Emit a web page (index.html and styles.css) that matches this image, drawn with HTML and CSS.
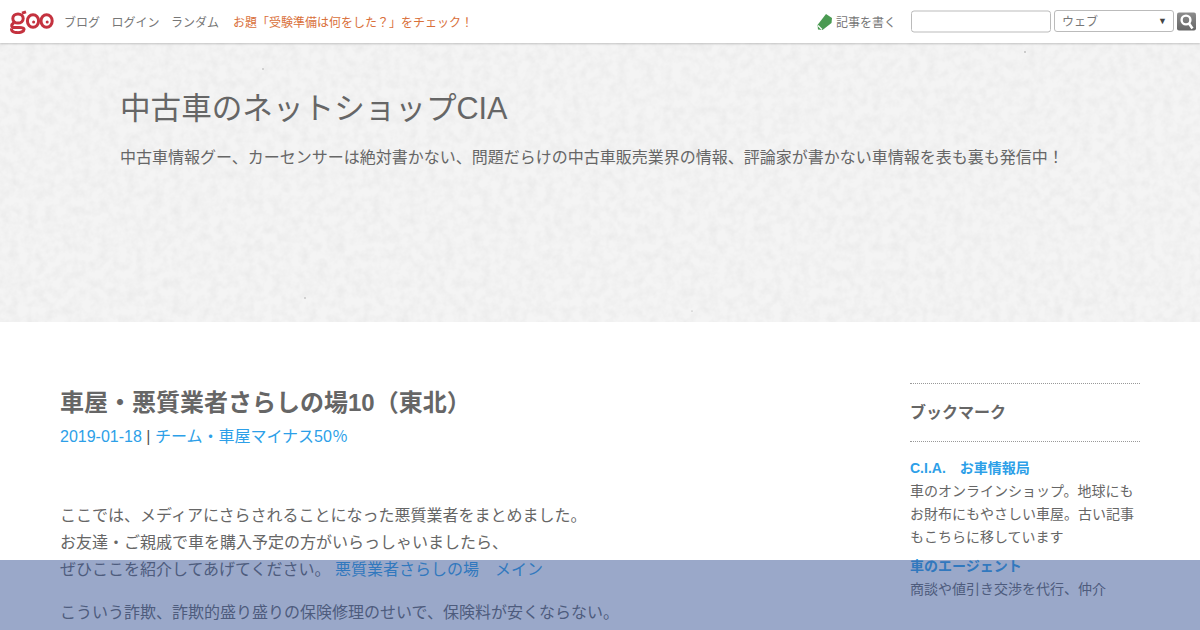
FILE: index.html
```html
<!DOCTYPE html>
<html lang="ja">
<head>
<meta charset="utf-8">
<title>中古車のネットショップCIA</title>
<link rel="stylesheet" href="styles.css">
</head>
<body>
<header class="topbar">
  <svg class="logo" width="44" height="24" viewBox="0 0 44 24" aria-label="goo">
    <g fill="none" stroke="#c4323f" stroke-width="3">
      <ellipse cx="8" cy="8.5" rx="5.2" ry="4.6"/>
      <path d="M12 3.2 L16 1.8 M4 12.5 C1 15 1 17 4 17.5 C8 18 13.5 16.5 14 19 C14.5 21.5 10 22.8 7 22.6 C3.5 22.4 1 21 1.6 18.5"/>
      <ellipse cx="23" cy="11" rx="5.6" ry="6.2"/>
      <ellipse cx="36.6" cy="11" rx="5.6" ry="6.2"/>
    </g>
    <circle cx="23.6" cy="12" r="1.5" fill="#c4323f"/>
    <circle cx="37.2" cy="12" r="1.5" fill="#c4323f"/>
  </svg>
  <nav class="nav">
    <a>ブログ</a><a>ログイン</a><a>ランダム</a>
  </nav>
  <a class="topic">お題「受験準備は何をした？」をチェック！</a>
  <div class="tools">
    <a class="write">
      <svg width="17" height="18" viewBox="0 0 16 18"><path d="M9.5 1 L15.5 5 L15 10 L6 17 L1.5 16.5 L1 12 Z" fill="#4a9a52"/><path d="M1.5 12.5 L5.5 16.5" stroke="#fff" stroke-width="1.2"/></svg>
      記事を書く
    </a>
    <input class="search" type="text">
    <div class="select"><span>ウェブ</span><i>▼</i></div>
    <button class="go" aria-label="検索">
      <svg width="19" height="18" viewBox="0 0 19 18"><circle cx="9" cy="7.5" r="4.4" fill="none" stroke="#fff" stroke-width="2.4"/><path d="M12 11 L15.5 16" stroke="#fff" stroke-width="2.6"/></svg>
    </button>
  </div>
</header>
<section class="hero">
  <svg class="paper" width="1200" height="280" aria-hidden="true">
    <filter id="paper" x="0" y="0" width="100%" height="100%">
      <feTurbulence type="fractalNoise" baseFrequency="0.11" numOctaves="3" seed="4"/>
      <feColorMatrix values="0 0 0 0 0.6  0 0 0 0 0.6  0 0 0 0 0.6  0.4 0 0 0 -0.14"/>
    </filter>
    <rect width="1200" height="280" filter="url(#paper)"/>
    <g fill="#999">
      <circle cx="263" cy="26" r=".7"/><circle cx="1025" cy="9" r=".8"/><circle cx="305" cy="255" r=".7"/><circle cx="692" cy="268" r=".6"/>
    </g>
  </svg>
  <h1 class="site-title">中古車のネットショップCIA</h1>
  <p class="site-desc">中古車情報グー、カーセンサーは絶対書かない、問題だらけの中古車販売業界の情報、評論家が書かない車情報を表も裏も発信中！</p>
</section>
<div class="content">
  <main class="article">
    <h2 class="entry-title">車屋・悪質業者さらしの場10（東北）</h2>
    <p class="meta"><a>2019-01-18</a> | <a>チーム・車屋マイナス50％</a></p>
    <p class="para first">ここでは、メディアにさらされることになった悪質業者をまとめました。<br>お友達・ご親戚で車を購入予定の方がいらっしゃいましたら、<br>ぜひここを紹介してあげてください。 <a>悪質業者さらしの場　メイン</a></p>
    <p class="para">こういう詐欺、詐欺的盛り盛りの保険修理のせいで、保険料が安くならない。</p>
  </main>
  <aside class="side">
    <h3 class="side-title">ブックマーク</h3>
    <ul class="links">
      <li><a>C.I.A.　お車情報局</a><p>車のオンラインショップ。地球にもお財布にもやさしい車屋。古い記事もこちらに移しています</p></li>
      <li><a>車のエージェント</a><p>商談や値引き交渉を代行、仲介</p></li>
    </ul>
  </aside>
</div>
<div class="overlay"></div>
</body>
</html>
```
FILE: styles.css
```css
* { box-sizing: border-box; }
html, body { margin: 0; height: 630px; overflow: hidden; }
body {
  position: relative;
  background: #fff;
  color: #666;
  font-family: "Liberation Sans", "Noto Sans CJK JP", sans-serif;
  font-size: 16px;
}
.topbar {
  position: relative;
  z-index: 1;
  display: flex;
  align-items: center;
  height: 43px;
  padding: 0 4px 0 10px;
  background: #fff;
  box-shadow: 0 1px 2px rgba(0,0,0,.2);
  font-size: 12px;
}
.logo { flex: none; }
.nav { display: flex; gap: 11.5px; margin-left: 10px; color: #777; }
.topic { margin-left: 14px; color: #d9703a; }
.tools { display: flex; align-items: center; margin-left: auto; color: #777; }
.write { display: flex; align-items: center; gap: 3px; margin-right: 15px; }
.search {
  width: 140px; height: 22px; margin: 0 3px 0 0; padding: 0;
  border: 1px solid #bbb; border-radius: 3px; background: #fff;
  transform: translateY(-0.5px);
}
.select {
  display: flex; justify-content: space-between; align-items: center;
  width: 120px; height: 22px; margin-right: 3px; padding: 0 6px 0 7px;
  border: 1px solid #bbb; border-radius: 3px;
  transform: translateY(-1px);
}
.select i { font-style: normal; font-size: 9px; color: #444; }
.go {
  display: flex; align-items: center; justify-content: center;
  width: 19px; height: 18px; padding: 0; border: 0; border-radius: 2px;
  background: linear-gradient(#8d8d8d, #666);
  transform: translateY(-0.5px);
}
.hero {
  position: relative;
  height: 279px;
  padding: 47px 120px 0;
  background: #f4f4f4;
  overflow: hidden;
}
.paper { position: absolute; left: 0; top: 0; }
.site-title {
  position: relative;
  margin: 0;
  font-size: 30.6px;
  font-weight: 400;
  line-height: 36px;
}
.site-desc {
  position: relative;
  margin: 20px 0 0;
  line-height: 24px;
}
.content {
  display: flex;
  justify-content: space-between;
  padding: 61px 60px 0;
}
.article { width: 780px; }
.entry-title { margin: 0; font-size: 24px; line-height: 40px; font-weight: 700; }
.meta { margin: 2px 0 0; line-height: 24px; color: #555; }
.meta a, .links a { color: #2d9fe8; }
.para { margin: 0 0 16px; line-height: 27px; }
.para.first { margin-top: 53px; }
.para a { color: #2d9fe8; }
.side {
  width: 230px;
  border-top: 1px dotted #999;
}
.side-title {
  margin: 0;
  padding: 18px 0;
  border-bottom: 1px dotted #999;
  font-size: 16px;
  line-height: 21px;
  font-weight: 700;
}
.links { margin: 15px 0 0; padding: 0; list-style: none; font-size: 14px; line-height: 23px; }
.links li { margin-bottom: 6px; }
.links a { font-weight: 700; }
.links p { margin: 0; }
.overlay {
  position: absolute;
  left: 0; right: 0; top: 560px; height: 70px;
  background: rgba(53,81,147,.5);
}
```
